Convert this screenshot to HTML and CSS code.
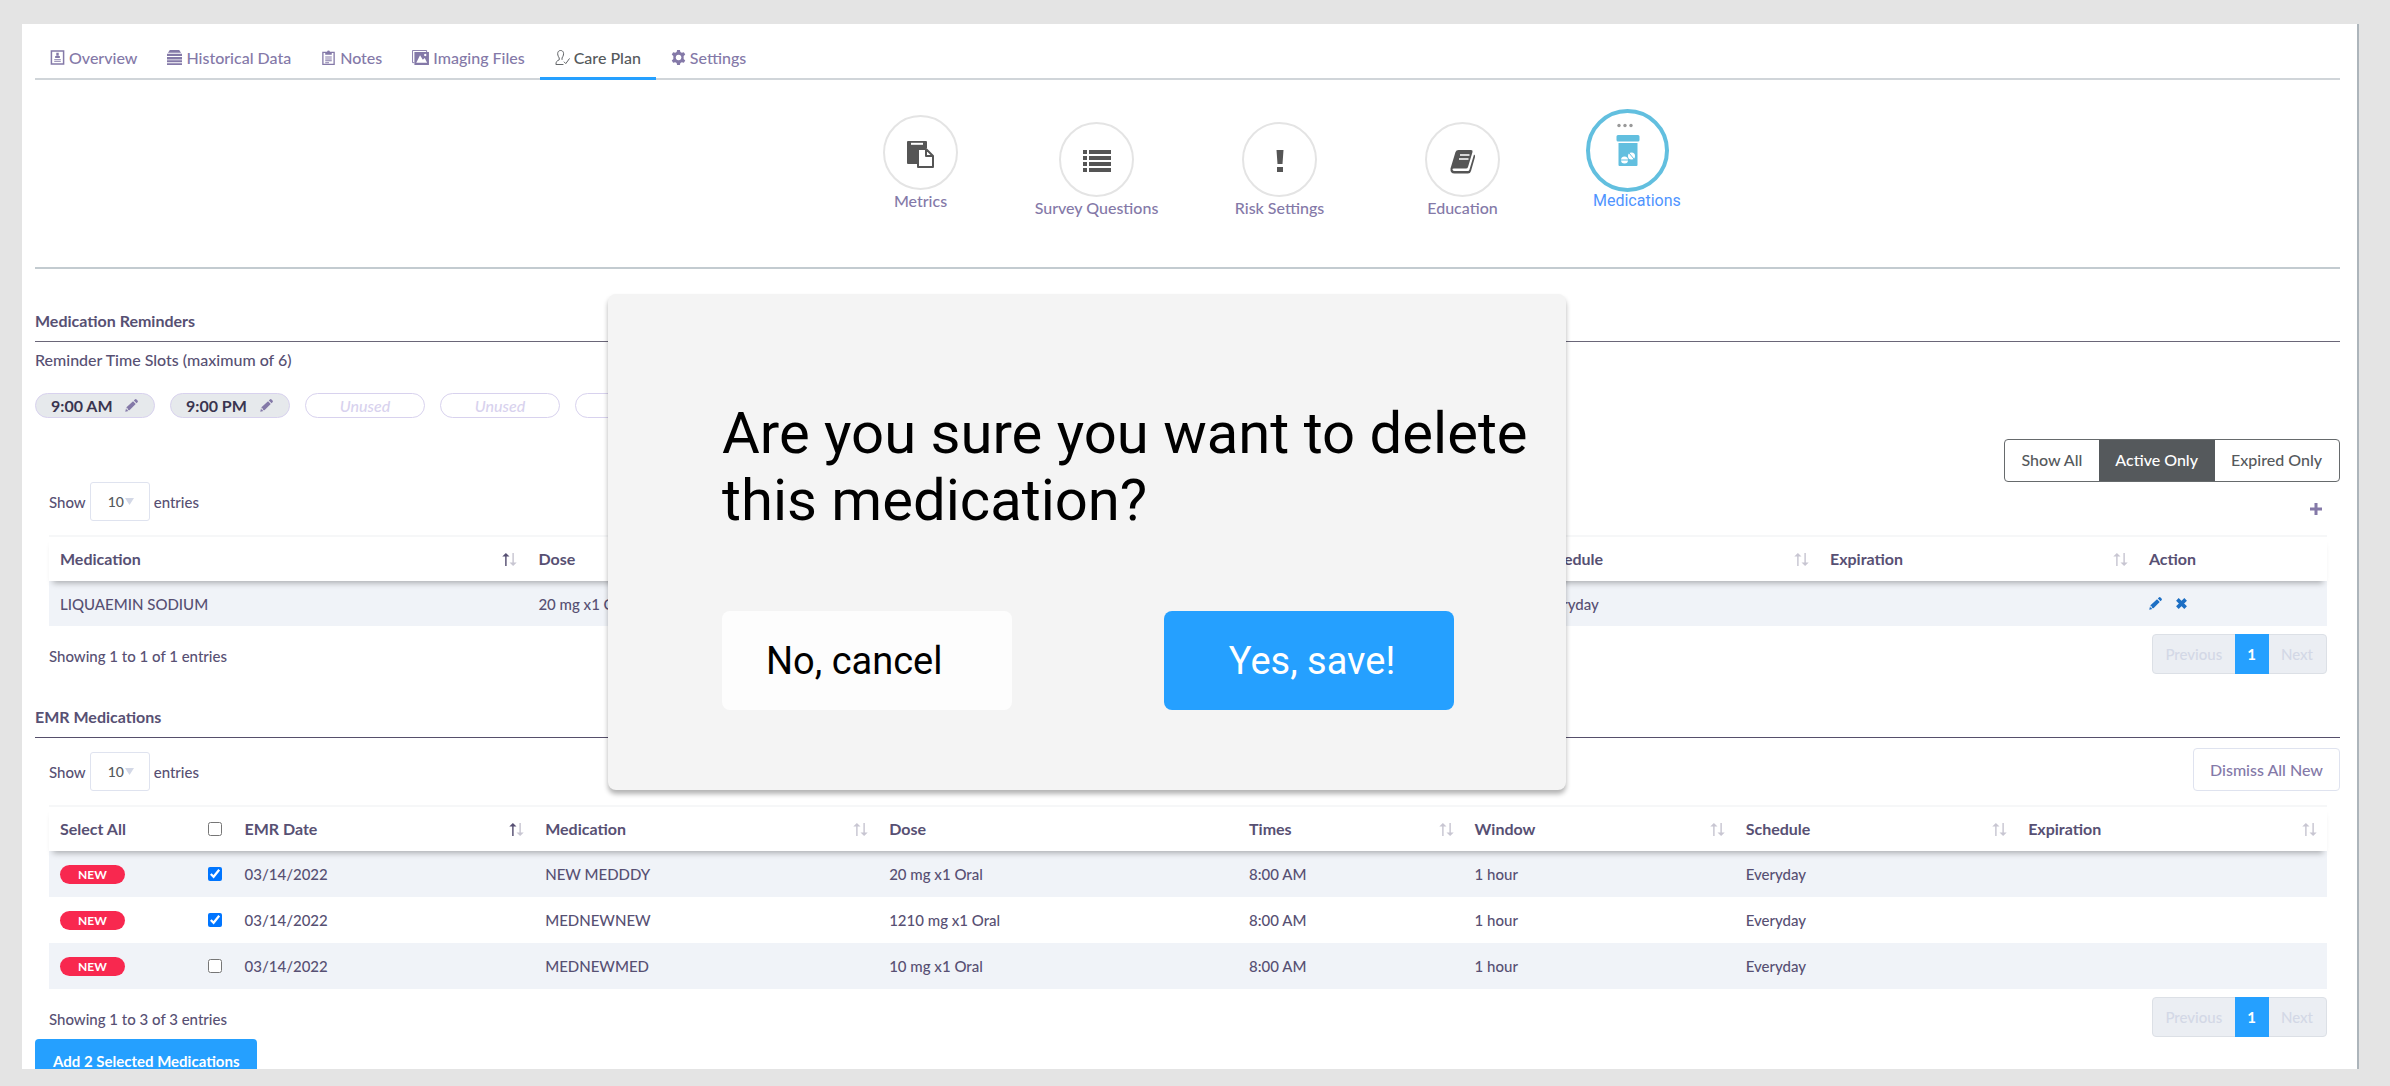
FILE: index.html
```
<!DOCTYPE html>
<html lang="en">
<head>
    <meta charset="UTF-8">
    <meta name="viewport" content="width=device-width, initial-scale=1.0">
    <title>Care Plan - Medications</title>
    <link rel="stylesheet" href="styles.css">
</head>
<body>
    <!-- icons shared by the page -->
    <svg class="sprite" aria-hidden="true">
        <symbol id="pencil" viewBox="0 0 16 16">
            <path fill="currentColor" d="M9.900 2.800l3.300 3.300-7.700 7.700-1.600-.4-.3-1.700-1.500-.2-.3-1.200zM10.900 1.800l1.200-1.200a1.500 1.500 0 0 1 2.100 0l1.200 1.200a1.500 1.500 0 0 1 0 2.100l-1.200 1.200zM1.300 11.300l.4 1.500 1.400.3.400 1.500.9.300L.3 15.700z"/>
        </symbol>
        <symbol id="sort" viewBox="0 0 20 18">
            <path class="up" d="M4 18V5H0l5-5 5 5H6v13z"/>
            <path class="down" d="M14 0v13h-4l5 5 5-5h-4V0z"/>
        </symbol>
    </svg>

    <div class="page">
        <nav class="tabs">
            <a href="#" class="tab">
                <svg class="tab-icon" viewBox="0 0 15 16"><path fill="none" stroke="currentColor" stroke-width="1.600" d="M1 1h13v14H1z"/><path fill="currentColor" d="M6.200 3h2.600v3H6.200zM5 6.500h5v2H5zM4 9.500h7v1H4zM4 11.500h7v1H4z"/></svg>
                Overview
            </a>
            <a href="#" class="tab">
                <svg class="tab-icon" viewBox="0 0 16 16"><path fill="currentColor" d="M3 0h10l2 3H1zM0 4h16v2.500H0zM0 7.500h16V10H0zM0 11h16v2H0zM0 14h16v2H0z"/></svg>
                Historical Data
            </a>
            <a href="#" class="tab">
                <svg class="tab-icon" viewBox="0 0 15 16"><path fill="none" stroke="currentColor" stroke-width="1.400" d="M1.500 2.600h12v12.700h-12z"/><path fill="currentColor" d="M4 2h2a1.500 1.500 0 0 1 3 0h2v3H4zM4 7h7v1H4zM4 9h7v1H4zM4 11h7v1H4zM4 13h4v1H4z"/></svg>
                Notes
            </a>
            <a href="#" class="tab">
                <svg class="tab-icon wide" viewBox="0 0 18 16"><path fill="none" stroke="currentColor" d="M2.500 13.500h-2v-13h15v2"/><path fill="currentColor" fill-rule="evenodd" d="M2.500 2H18v14H2.500zM4.500 13.500H16l-2.500-5-2 2-3-5zM14 4a1.300 1.300 0 1 0 .1 0z"/></svg>
                Imaging Files
            </a>
            <a href="#" class="tab active">
                <svg class="tab-icon" viewBox="0 0 16 16"><path fill="none" stroke="currentColor" d="M9 15.500H1c0-3 1-4 3.500-5v-2C1.500 4 3 .5 6 .5S10.500 4 7.500 8.500v2M9.500 12.500l2 2L15.500 9"/></svg>
                Care Plan
            </a>
            <a href="#" class="tab">
                <svg class="tab-icon" viewBox="0 0 16 16"><path fill="currentColor" fill-rule="evenodd" d="M6.500 0h3l.5 2.200 1.500.8 2.200-.7 1.500 2.600L13.500 6.500v3l1.700 1.600-1.500 2.600-2.200-.7-1.500.8L9.500 16h-3L6 13.800l-1.500-.8-2.200.7-1.500-2.600L2.500 9.500v-3L.8 4.900l1.500-2.600 2.200.7L6 2.200zM8 5a3 3 0 1 0 .1 0z"/></svg>
                Settings
            </a>
        </nav>

        <nav class="plan-nav">
            <a href="#" class="plan-item first">
                <span class="circle"><svg viewBox="0 0 28 28"><path fill="currentColor" d="M1 1h18a1 1 0 0 1 1 1v6h-9v16H1a1 1 0 0 1-1-1V2a1 1 0 0 1 1-1z"/><path stroke="#fff" stroke-width="2" d="M4 3.800h12"/><path fill="#fff" stroke="currentColor" stroke-width="2" stroke-linejoin="round" d="M11 9h8l7 7v11H11zM19 9v7h7"/></svg></span>
                Metrics
            </a>
            <a href="#" class="plan-item">
                <span class="circle"><svg viewBox="0 0 28 28"><path fill="currentColor" d="M0 3h4v4H0zM6 3h22v4H6zM0 9h4v4H0zM6 9h22v4H6zM0 15h4v4H0zM6 15h22v4H6zM0 21h4v4H0zM6 21h22v4H6z"/></svg></span>
                Survey Questions
            </a>
            <a href="#" class="plan-item">
                <span class="circle"><svg viewBox="0 0 28 28"><path fill="currentColor" d="M10.500 3h7l-1 14h-5zM11 20h6v5h-6z"/></svg></span>
                Risk Settings
            </a>
            <a href="#" class="plan-item">
                <span class="circle"><svg viewBox="0 0 28 28"><path fill="currentColor" d="M9.500 3H22q2 0 1.500 2L19 20q-.5 1.500-2 1.500H5q-2 0-1.500 1.200T5.500 24H19q1 0 1.400-1.300L25 7.500q1.500.8 1 2.500l-4 14q-.7 2.500-3 2.500H5.500Q1 26.500 1.500 21.500L6.500 5q.7-2 3-2z"/><path stroke="#fff" stroke-width="1.500" d="M11 8h9.500M10 12h9.500"/></svg></span>
                Education
            </a>
            <a href="#" class="plan-item current">
                <span class="circle">
                    <svg viewBox="0 0 28 60">
                        <g fill="#999"><circle cx="5" cy="4.500" r="1.700"/><circle cx="11" cy="4.500" r="1.700"/><circle cx="17" cy="4.500" r="1.700"/></g>
                        <path fill="currentColor" d="M4 14h20q1.500 0 1.500 1.500V19q0 1.500-1.500 1.500H4Q2.500 20.500 2.500 19v-3.500Q2.500 14 4 14zM4.500 22h19v22q0 1-1 1h-17q-1 0-1-1z"/>
                        <circle cx="10.500" cy="39" r="3.500" fill="#fff"/><circle cx="17.500" cy="35" r="3.500" fill="#fff"/>
                        <path stroke="currentColor" d="M7 39h7M15 32l5 6"/>
                    </svg>
                </span>
                <span class="current-label">Medications</span>
            </a>
        </nav>

        <section class="reminders">
            <h2>Medication Reminders</h2>
            <p class="slots-label">Reminder Time Slots (maximum of 6)</p>
            <div class="slots">
                <button class="slot set">9:00 AM <svg><use href="#pencil"/></svg></button>
                <button class="slot set">9:00 PM <svg><use href="#pencil"/></svg></button>
                <button class="slot">Unused</button>
                <button class="slot">Unused</button>
                <button class="slot" aria-label="Unused"></button>
                <button class="slot" aria-label="Unused"></button>
            </div>

            <div class="filter">
                <button>Show All</button>
                <button class="on">Active Only</button>
                <button>Expired Only</button>
            </div>

            <div class="toolbar">
                <label class="length">Show <select><option>10</option></select> entries</label>
                <button class="add-icon" aria-label="Add medication"><svg viewBox="0 0 12 12"><path fill="currentColor" d="M4.500 0h3v4.500H12v3H7.500V12h-3V7.500H0v-3h4.500z"/></svg></button>
            </div>
            <table>
                <colgroup>
                    <col class="r-med"><col class="r-dose"><col class="r-times"><col class="r-window"><col class="r-sched"><col class="r-exp"><col>
                </colgroup>
                <thead>
                    <tr>
                        <th><div>Medication <svg class="asc"><use href="#sort"/></svg></div></th>
                        <th>Dose</th>
                        <th><div>Times <svg><use href="#sort"/></svg></div></th>
                        <th><div>Window <svg><use href="#sort"/></svg></div></th>
                        <th><div>Schedule <svg><use href="#sort"/></svg></div></th>
                        <th><div>Expiration <svg><use href="#sort"/></svg></div></th>
                        <th>Action</th>
                    </tr>
                </thead>
                <tbody>
                    <tr>
                        <td>LIQUAEMIN SODIUM</td>
                        <td>20 mg x1 Oral</td>
                        <td></td>
                        <td></td>
                        <td>Everyday</td>
                        <td></td>
                        <td>
                            <div class="actions">
                                <button aria-label="Edit"><svg><use href="#pencil"/></svg></button>
                                <button aria-label="Delete"><svg class="cross" viewBox="0 0 12 12"><path stroke="currentColor" stroke-width="4" d="M1.500 1.500l9 9M10.500 1.500l-9 9"/></svg></button>
                            </div>
                        </td>
                    </tr>
                </tbody>
            </table>
            <div class="table-footer">
                <span>Showing 1 to 1 of 1 entries</span>
                <div class="pager"><button disabled>Previous</button><button class="on">1</button><button disabled>Next</button></div>
            </div>
        </section>

        <section class="emr">
            <h2>EMR Medications</h2>
            <div class="toolbar">
                <label class="length">Show <select><option>10</option></select> entries</label>
                <button class="dismiss">Dismiss All New</button>
            </div>
            <table>
                <colgroup>
                    <col class="e-select"><col class="e-check"><col class="e-date"><col class="e-med"><col class="e-dose"><col class="e-times"><col class="e-window"><col class="e-sched"><col>
                </colgroup>
                <thead>
                    <tr>
                        <th><label for="all">Select All</label></th>
                        <th><input type="checkbox" id="all"></th>
                        <th><div>EMR Date <svg class="asc"><use href="#sort"/></svg></div></th>
                        <th><div>Medication <svg><use href="#sort"/></svg></div></th>
                        <th>Dose</th>
                        <th><div>Times <svg><use href="#sort"/></svg></div></th>
                        <th><div>Window <svg><use href="#sort"/></svg></div></th>
                        <th><div>Schedule <svg><use href="#sort"/></svg></div></th>
                        <th><div>Expiration <svg><use href="#sort"/></svg></div></th>
                    </tr>
                </thead>
                <tbody>
                    <tr>
                        <td><span class="badge">NEW</span></td>
                        <td><input type="checkbox" aria-label="NEW MEDDDY" checked></td>
                        <td>03/14/2022</td>
                        <td>NEW MEDDDY</td>
                        <td>20 mg x1 Oral</td>
                        <td>8:00 AM</td>
                        <td>1 hour</td>
                        <td>Everyday</td>
                        <td></td>
                    </tr>
                    <tr>
                        <td><span class="badge">NEW</span></td>
                        <td><input type="checkbox" aria-label="MEDNEWNEW" checked></td>
                        <td>03/14/2022</td>
                        <td>MEDNEWNEW</td>
                        <td>1210 mg x1 Oral</td>
                        <td>8:00 AM</td>
                        <td>1 hour</td>
                        <td>Everyday</td>
                        <td></td>
                    </tr>
                    <tr>
                        <td><span class="badge">NEW</span></td>
                        <td><input type="checkbox" aria-label="MEDNEWMED"></td>
                        <td>03/14/2022</td>
                        <td>MEDNEWMED</td>
                        <td>10 mg x1 Oral</td>
                        <td>8:00 AM</td>
                        <td>1 hour</td>
                        <td>Everyday</td>
                        <td></td>
                    </tr>
                </tbody>
            </table>
            <div class="table-footer">
                <span>Showing 1 to 3 of 3 entries</span>
                <div class="pager"><button disabled>Previous</button><button class="on">1</button><button disabled>Next</button></div>
            </div>
            <button class="add-selected">Add 2 Selected Medications</button>
        </section>
    </div>

    <div class="modal" role="dialog" aria-labelledby="question">
        <p id="question">Are you sure you want to delete this medication?</p>
        <div class="modal-buttons">
            <button class="cancel">No, cancel</button>
            <button class="confirm">Yes, save!</button>
        </div>
    </div>
</body>
</html>
```

FILE: styles.css
```
* {
    box-sizing: border-box;
}
body {
    margin: 0;
    padding: 24px 31px 17px 22px;
    height: 100vh;
    overflow: hidden;
    background-color: #e4e4e4;
    font-family: Lato, sans-serif;
    font-size: 16px;
    font-weight: 500;
    line-height: 24px;
    color: #575073;
}
button, select {
    font: inherit;
    color: inherit;
    background: none;
    border: none;
    padding: 0;
    cursor: pointer;
}
a {
    text-decoration: none;
    color: #8479a8;
}
.sprite {
    display: none;
}
.page {
    height: 100%;
    overflow: hidden;
    padding: 16px 17px 0 13px;
    background-color: #fff;
    border-right: 2px solid #adb5bb;
}

/* tabs */
.tabs {
    display: flex;
    border-bottom: 2px solid #d0d5d9;
}
.tab {
    display: flex;
    align-items: center;
    gap: 4px;
    padding: 6px 15px 7px;
    margin-bottom: -2px;
    border-bottom: 3px solid transparent;
}
.tab.active {
    color: #55595c;
    border-color: #25a0ff;
}
.tab-icon {
    width: 15px;
    height: 15px;
    margin-bottom: 2px;
}
.tab-icon.wide {
    width: 17px;
}

/* care plan sections */
.plan-nav {
    display: flex;
    justify-content: center;
    height: 189px;
    padding: 42px 0 0 153px;
    line-height: 22px;
    border-bottom: 2px solid #c3cbd0;
}
.plan-item {
    display: flex;
    flex-direction: column;
    align-items: center;
    width: 183px;
}
.plan-item.first {
    width: 169px;
    margin-top: -7px;
}
.circle {
    display: flex;
    align-items: center;
    justify-content: center;
    width: 75px;
    height: 75px;
    padding-top: 2px;
    border: 2px solid #e4e4e4;
    border-radius: 50%;
    color: #555;
}
.circle svg {
    width: 28px;
    height: 28px;
}
.plan-item.current {
    width: 106px;
    margin: -13px 0 0 32px;
    align-items: flex-start;
    font-family: Roboto, sans-serif;
    font-weight: 400;
    line-height: 18px;
    color: #4f94ff;
}
.current .circle {
    width: 83px;
    height: 83px;
    padding: 0;
    border: 4px solid #62bfdf;
    color: #62bfdf;
}
.current .circle svg {
    height: 60px;
}
.current-label {
    padding-left: 7px;
}

/* sections */
h2 {
    margin: 0;
    padding-bottom: 9px;
    font-size: 16px;
    line-height: 22px;
    border-bottom: 1px solid #6a6678;
}
.emr h2 {
    border-color: #564f6b;
}
.reminders {
    padding-top: 41px;
}
.emr {
    padding-top: 32px;
}
.slots-label {
    margin: 6px 0 21px;
}
.slots {
    display: flex;
    gap: 15px;
}
.slot {
    width: 120px;
    height: 25px;
    line-height: 22px;
    border: 1px solid #d8d2ee;
    border-radius: 13px;
    font-style: italic;
    color: #d8d2ee;
}
.slot.set {
    display: flex;
    align-items: center;
    justify-content: space-between;
    padding: 0 16px 0 15px;
    font-style: normal;
    font-weight: bold;
    color: #3a3550;
    background-color: #e6e9ec;
}
.slot svg {
    width: 13px;
    height: 13px;
    color: #8479a8;
}
.filter {
    display: flex;
    width: fit-content;
    margin: 21px 0 0 auto;
    border: 1px solid #666a6c;
    border-radius: 4px;
    color: #55595c;
}
.filter button {
    padding: 8px 17px 9px 16px;
}
.filter .on {
    color: #fff;
    background-color: #55595c;
}

/* tables */
.toolbar {
    display: flex;
    justify-content: space-between;
    align-items: flex-end;
    padding-left: 14px;
}
.emr .toolbar {
    padding-top: 10px;
}
.length {
    display: flex;
    align-items: center;
    gap: 4px;
    font-size: 15px;
}
select {
    width: 60px;
    height: 39px;
    padding: 0 17px;
    border: 1px solid #dfe3ef;
    border-radius: 3px;
    appearance: none;
    font-size: 14px;
    color: #55595c;
    background: url("data:image/svg+xml,%3Csvg xmlns='http://www.w3.org/2000/svg' width='9' height='7'%3E%3Cpath fill='%23d3d8e6' d='M0 0h9L4.500 7z'/%3E%3C/svg%3E") no-repeat right 15px center;
}
.add-icon {
    height: 24px;
    margin-right: 18px;
    color: #8479a8;
}
.add-icon svg {
    display: block;
    width: 12px;
    height: 12px;
}
.dismiss {
    height: 43px;
    padding: 0 16px;
    border: 1px solid #dfe3ef;
    border-radius: 4px;
    color: #8479a8;
}
table {
    width: calc(100% - 27px);
    margin: 14px 13px 0 14px;
    table-layout: fixed;
    border-spacing: 0;
}
thead {
    position: relative;
    box-shadow: 0 6px 6px -4px rgba(0, 0, 0, 0.3);
}
th, td {
    height: 45px;
    padding: 0 10px 0 11px;
    text-align: left;
}
td {
    font-size: 15px;
}
th {
    height: 46px;
    border-top: 2px solid #f6f7f8;
    background-color: #fff;
}
.emr td {
    height: 46px;
}
th div {
    display: flex;
    justify-content: space-between;
    align-items: center;
}
th svg {
    --up: #c8c6d2;
    width: 15px;
    height: 13px;
}
th svg.asc {
    --up: #575073;
}
.up {
    fill: var(--up);
}
.down {
    fill: #c8c6d2;
}
tbody tr:nth-child(odd) {
    background-color: #f0f3f8;
}
input[type="checkbox"] {
    display: block;
    width: 14px;
    height: 14px;
    margin: 0;
}
.r-med { width: 21%; }
.r-dose { width: 16.5%; }
.r-times { width: 13.1%; }
.r-window { width: 14.3%; }
.r-sched { width: 12.8%; }
.r-exp { width: 14%; }
.e-select { width: 6.5%; }
.e-check { width: 1.6%; }
.e-date { width: 13.2%; }
.e-med { width: 15.1%; }
.e-dose { width: 15.8%; }
.e-times { width: 9.9%; }
.e-window { width: 11.9%; }
.e-sched { width: 12.4%; }
.actions {
    display: flex;
    gap: 14px;
    color: #1d6fc4;
}
.actions svg {
    display: block;
    width: 13px;
    height: 13px;
}
.actions .cross {
    width: 11px;
}
.badge {
    display: block;
    width: 65px;
    border-radius: 10px;
    background-color: #f8284f;
    color: #fff;
    font-size: 12px;
    font-weight: bold;
    line-height: 19px;
    text-align: center;
}
.table-footer {
    display: flex;
    justify-content: space-between;
    align-items: center;
    padding: 8px 13px 0 14px;
    font-size: 15px;
}
.table-footer span {
    padding-top: 4px;
}
.pager {
    display: flex;
    height: 40px;
    border: 1px solid #dce0e6;
    border-radius: 4px;
    background-color: #ebeef3;
}
.pager button {
    padding: 0 13px 0 12px;
    margin: -1px 0;
    color: #d3d8e6;
}
.pager .on {
    color: #fff;
    font-weight: bold;
    background-color: #25a0ff;
}
.add-selected {
    height: 43px;
    margin-top: 2px;
    padding: 0 18px;
    border-radius: 4px;
    background-color: #25a0ff;
    color: #fff;
    font-size: 15px;
    font-weight: bold;
}

/* delete confirmation */
.modal {
    position: absolute;
    left: 608px;
    top: 294px;
    width: 958px;
    padding: 106px 30px 80px 114px;
    border-radius: 8px;
    background-color: #f4f4f4;
    box-shadow: 0 4px 5px rgba(0, 0, 0, 0.3);
    font-family: Roboto, sans-serif;
    font-weight: 400;
    color: #000;
}
#question {
    margin: 0;
    font-size: 58px;
    line-height: 67px;
}
.modal-buttons {
    display: flex;
    gap: 152px;
    margin-top: 77px;
    font-size: 38px;
}
.modal-buttons button {
    width: 290px;
    height: 99px;
    border-radius: 8px;
}
.modal-buttons .cancel {
    padding-left: 44px;
    text-align: left;
    background-color: #fdfdfd;
}
.modal-buttons .confirm {
    padding-left: 6px;
    background-color: #25a0ff;
    color: #fff;
}
```
